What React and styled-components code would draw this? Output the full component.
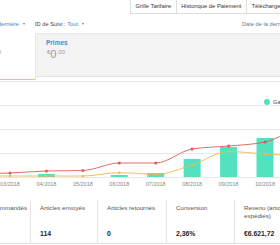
import React from "react";
import styled, { createGlobalStyle } from "styled-components";

const Global = createGlobalStyle`
  html, body { margin: 0; padding: 0; background: #fff; }
  body {
    font-family: "Liberation Sans", Arial, sans-serif;
    width: 280px;
    height: 245px;
    overflow: hidden;
  }
`;

const Page = styled.div`
  width: 280px;
  height: 245px;
  overflow: hidden;
  display: flex;
  flex-direction: column;
`;

const TabBar = styled.div`
  display: flex;
  height: 14px;
  padding-left: 130px;
  flex-shrink: 0;
`;

const Tab = styled.div`
  flex-shrink: 0;
  box-sizing: border-box;
  height: 14px;
  display: flex;
  align-items: center;
  padding: 0 4.5px 1px;
  border-left: 1px solid #ddd;
  border-bottom: 1px solid #ddd;
  font-size: 5.8px;
  color: #333;
  white-space: nowrap;
`;

const FilterRow = styled.div`
  display: flex;
  align-items: center;
  height: 19px;
  flex-shrink: 0;
  font-size: 5.7px;
  color: #444;
  white-space: nowrap;
`;

const ClipRight = styled.div`
  width: ${(p) => p.$w}px;
  flex-shrink: 0;
  overflow: hidden;
  display: flex;
  justify-content: flex-end;
  align-items: center;
`;

const Filter = styled.div`
  display: flex;
  align-items: center;
  flex-shrink: 0;
  margin-left: ${(p) => p.$ml || 0}px;
`;

const Blue = styled.span`
  color: #3489c9;
`;

const Caret = styled.span`
  width: 0;
  height: 0;
  margin-left: 4px;
  border-left: 1.5px solid transparent;
  border-right: 1.5px solid transparent;
  border-top: 2px solid #777;
`;

const RightInfo = styled.div`
  margin-left: auto;
  width: 38px;
  overflow: hidden;
  flex-shrink: 0;
  color: #777;
`;

const CardsRow = styled.div`
  display: flex;
  align-items: flex-start;
  height: 47px;
  flex-shrink: 0;
`;

const SelectedCard = styled.div`
  width: 36px;
  height: 47px;
  box-sizing: border-box;
  flex-shrink: 0;
  background: #fff;
  border-right: 1px solid #e6e6e6;
  box-shadow: inset 0 -1px 0 #f3c06b, inset -1px -14px 0 -13px #f3c06b;
  overflow: hidden;
  display: flex;
  justify-content: flex-end;
  padding-top: 6px;
`;

const CardBody = styled.div`
  flex-shrink: 0;
  padding-right: ${(p) => p.$pr || 0}px;
`;

const Panel = styled.div`
  flex: 1;
  height: 44px;
  box-sizing: border-box;
  background: #f3f3f3;
  border-top: 1px solid #e8e8e8;
  border-bottom: 1px solid #e2e2e2;
  padding: 5px 10px;
`;

const CardTitle = styled.div`
  font-size: 6.5px;
  line-height: 8px;
  font-weight: bold;
  color: #3a8fd0;
  white-space: nowrap;
`;

const CardValue = styled.div`
  margin-top: 1px;
  color: #9b9b9b;
  font-size: 11px;
  line-height: 12px;
  white-space: nowrap;
  display: flex;
  align-items: flex-start;
  padding-left: 1px;
`;

const Sup = styled.span`
  font-size: 6px;
  line-height: 7px;
  margin-top: 1px;
`;

const ChartWrap = styled.div`
  position: relative;
  height: 110px;
  flex-shrink: 0;
`;

const Legend = styled.div`
  position: absolute;
  top: 19px;
  left: 264px;
  display: flex;
  align-items: center;
  font-size: 5.7px;
  color: #444;
  white-space: nowrap;
`;

const Dot = styled.span`
  width: 6px;
  height: 6px;
  border-radius: 50%;
  background: #50e3c2;
  margin-right: 3px;
  flex-shrink: 0;
`;

const StatsRow = styled.div`
  display: flex;
  height: 44px;
  margin-top: 10px;
  box-sizing: border-box;
  border-bottom: 1px solid #ddd;
  flex-shrink: 0;
`;

const StatCell = styled.div`
  width: ${(p) => p.$w}px;
  flex-shrink: 0;
  box-sizing: border-box;
  border-right: ${(p) => (p.$last ? "none" : "1px solid #e5e5e5")};
  padding: 4px 0 5px 9px;
  display: flex;
  flex-direction: column;
  justify-content: space-between;
  overflow: hidden;
`;

const ClipCell = styled(StatCell)`
  padding-left: 0;
  padding-right: 3px;
  align-items: flex-end;
`;

const StatLabel = styled.div`
  font-size: 6.2px;
  line-height: 8px;
  color: #555;
  white-space: nowrap;
`;

const StatValue = styled.div`
  font-size: 6.8px;
  line-height: 9px;
  font-weight: bold;
  color: #222;
  white-space: nowrap;
`;

function monotonePath(pts) {
  const n = pts.length;
  const x = pts.map((p) => p[0]);
  const y = pts.map((p) => p[1]);
  const h = [];
  const s = [];
  for (let i = 0; i < n - 1; i++) {
    h[i] = x[i + 1] - x[i];
    s[i] = (y[i + 1] - y[i]) / h[i];
  }
  const t = new Array(n);
  for (let i = 1; i < n - 1; i++) {
    const p = (s[i - 1] * h[i] + s[i] * h[i - 1]) / (h[i - 1] + h[i]);
    t[i] =
      (Math.sign(s[i - 1]) + Math.sign(s[i])) *
        Math.min(Math.abs(s[i - 1]), Math.abs(s[i]), 0.5 * Math.abs(p)) || 0;
  }
  t[0] = s[0];
  t[n - 1] = s[n - 2];
  let d = `M${x[0]},${y[0]}`;
  for (let i = 0; i < n - 1; i++) {
    const dx = h[i] / 3;
    d += ` C${x[i] + dx},${y[i] + dx * t[i]} ${x[i + 1] - dx},${
      y[i + 1] - dx * t[i + 1]
    } ${x[i + 1]},${y[i + 1]}`;
  }
  return d;
}

const months = ["03/2018", "04/2018", "05/2018", "06/2018", "07/2018", "08/2018", "09/2018", "10/2018"];
const xs = months.map((_, i) => 10 + i * 36.43);
const red = [93, 91, 90.5, 83, 83, 69, 66, 62];
const yellow = [96, 96, 96, 92.7, 94.3, 85, 71.5, 74];
const bars = [0, 3, 0, 2, 4, 18, 30, 39];
const grid = [1, 25, 49, 73, 97];

function Chart() {
  const redPts = [[-26, 94], ...xs.map((x, i) => [x, red[i]]), [301, 46]];
  const yelPts = [[-26, 96], ...xs.map((x, i) => [x, yellow[i]]), [301, 76]];
  return (
    <svg width="280" height="110" viewBox="0 0 280 110" style={{ display: "block" }}>
      {grid.map((g) => (
        <line key={g} x1="0" x2="280" y1={g + 0.5} y2={g + 0.5} stroke="#e8e8e8" strokeWidth="1" />
      ))}
      {bars.map((b, i) =>
        b > 0 ? (
          <rect key={i} x={xs[i] - 8.5} y={97 - b} width="17" height={b} fill="#52e2c0" />
        ) : null
      )}
      <path d={monotonePath(yelPts)} fill="none" stroke="#f3b94d" strokeWidth="0.9" />
      <path d={monotonePath(redPts)} fill="none" stroke="#dc5b57" strokeWidth="0.9" />
      {xs.map((x, i) => (
        <circle key={"y" + i} cx={x} cy={yellow[i]} r="1.2" fill="#f3b94d" />
      ))}
      {xs.map((x, i) => (
        <circle key={"r" + i} cx={x} cy={red[i]} r="1.5" fill="#dc5b57" />
      ))}
      {months.map((m, i) => (
        <text
          key={m}
          x={xs[i]}
          y="106"
          textAnchor="middle"
          fontSize="5.5"
          fill="#888"
          fontFamily="Liberation Sans, Arial, sans-serif"
        >
          {m}
        </text>
      ))}
    </svg>
  );
}

export default function App() {
  return (
    <Page>
      <Global />
      <TabBar>
        <Tab>Grille Tarifaire</Tab>
        <Tab>Historique de Paiement</Tab>
        <Tab>Télécharger les rapports</Tab>
      </TabBar>
      <FilterRow>
        <ClipRight $w={25}>
          <Filter>
            Période :&nbsp;<Blue>Année dernière</Blue>
            <Caret />
          </Filter>
        </ClipRight>
        <Filter $ml={10}>
          ID de Suivi :&nbsp;<Blue>Tout</Blue>
          <Caret />
        </Filter>
        <RightInfo>Date de la dernière mise à jour</RightInfo>
      </FilterRow>
      <CardsRow>
        <SelectedCard>
          <CardBody $pr={34}>
            <CardTitle>Gains</CardTitle>
            <CardValue>
              <Sup>€</Sup>264<Sup>.10</Sup>
            </CardValue>
          </CardBody>
        </SelectedCard>
        <Panel>
          <CardTitle>Primes</CardTitle>
          <CardValue>
            <Sup>€</Sup>0<Sup>.00</Sup>
          </CardValue>
        </Panel>
      </CardsRow>
      <ChartWrap>
        <Chart />
        <Legend>
          <Dot />
          Gains
        </Legend>
      </ChartWrap>
      <StatsRow>
        <ClipCell $w={31}>
          <StatLabel>Articles commandés</StatLabel>
          <StatValue>&nbsp;</StatValue>
        </ClipCell>
        <StatCell $w={67}>
          <StatLabel>Articles envoyés</StatLabel>
          <StatValue>114</StatValue>
        </StatCell>
        <StatCell $w={69}>
          <StatLabel>Articles retournés</StatLabel>
          <StatValue>0</StatValue>
        </StatCell>
        <StatCell $w={68}>
          <StatLabel>Conversion</StatLabel>
          <StatValue>2,36%</StatValue>
        </StatCell>
        <StatCell $w={60} $last>
          <StatLabel>
            Revenu (articles
            <br />
            expédiés)
          </StatLabel>
          <StatValue>€6.621,72</StatValue>
        </StatCell>
      </StatsRow>
    </Page>
  );
}
